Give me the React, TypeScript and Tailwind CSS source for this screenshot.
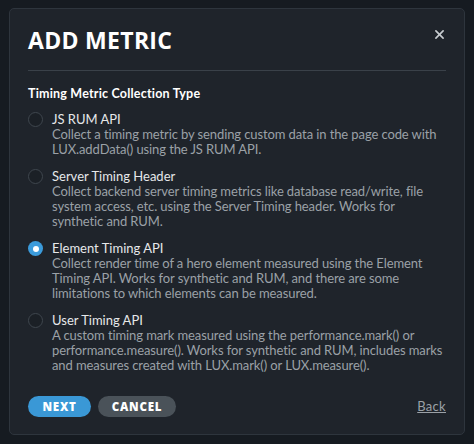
import { useState } from "react";

const options = [
  {
    id: "js",
    label: "JS RUM API",
    desc: "Collect a timing metric by sending custom data in the page code with LUX.addData() using the JS RUM API.",
  },
  {
    id: "server",
    label: "Server Timing Header",
    desc: "Collect backend server timing metrics like database read/write, file system access, etc. using the Server Timing header. Works for synthetic and RUM.",
  },
  {
    id: "element",
    label: "Element Timing API",
    desc: "Collect render time of a hero element measured using the Element Timing API. Works for synthetic and RUM, and there are some limitations to which elements can be measured.",
  },
  {
    id: "user",
    label: "User Timing API",
    desc: "A custom timing mark measured using the performance.mark() or performance.measure(). Works for synthetic and RUM, includes marks and measures created with LUX.mark() or LUX.measure().",
  },
];

export default function App() {
  const [selected, setSelected] = useState("element");

  return (
    <div className="h-[444px] w-[474px] bg-[#161b21] px-[9px] pt-[8px] font-['Lato',sans-serif]">
      <div className="h-[427px] rounded-[5px] border border-[#2e353d] bg-[#1f242b] px-[18px]">
        {/* Header */}
        <div className="flex items-start justify-between pt-[15px] pb-[14px] border-b border-[#3a4149]">
          <h2 className="font-['Open_Sans',sans-serif] text-[23px] font-bold leading-[32px] tracking-[0.3px] text-white">
            ADD METRIC
          </h2>
          <button className="mt-[6px] mr-[2px] text-[#c9cdd1]">
            <svg width="9" height="9" viewBox="0 0 10 10" stroke="currentColor" strokeWidth="1.8" strokeLinecap="round">
              <line x1="1" y1="1" x2="9" y2="9" />
              <line x1="9" y1="1" x2="1" y2="9" />
            </svg>
          </button>
        </div>

        {/* Options */}
        <div className="pt-[15px]">
          <p className="text-[12.5px] font-bold leading-[15px] tracking-[0.2px] text-white">
            Timing Metric Collection Type
          </p>
          <div className="mt-[11px] flex flex-col gap-[12px]">
            {options.map((o) => {
              const on = selected === o.id;
              return (
                <label
                  key={o.id}
                  className="flex cursor-pointer gap-[9px]"
                  onClick={() => setSelected(o.id)}
                >
                  <span
                    className={
                      on
                        ? "flex h-[15px] w-[15px] shrink-0 items-center justify-center rounded-full bg-[#3b9bdb]"
                        : "h-[15px] w-[15px] shrink-0 rounded-full border border-[#3f464e] bg-[#1b2026]"
                    }
                  >
                    {on && <span className="h-[6px] w-[6px] rounded-full bg-white" />}
                  </span>
                  <span className="flex flex-col">
                    <span className="text-[13px] leading-[15px] text-[#e6e8ea]">
                      {o.label}
                    </span>
                    <span className="text-[13px] leading-[15px] tracking-[-0.1px] text-[#9ba1a7]">
                      {o.desc}
                    </span>
                  </span>
                </label>
              );
            })}
          </div>
        </div>

        {/* Footer */}
        <div className="mt-[23px] flex items-center">
          <button className="h-[21px] w-[63px] rounded-full bg-[#3a98d6] font-['Open_Sans',sans-serif] text-[11.5px] font-extrabold tracking-[0.8px] text-white">
            NEXT
          </button>
          <button className="ml-[7px] h-[21px] w-[78px] rounded-full bg-[#4a5259] font-['Open_Sans',sans-serif] text-[11.5px] font-extrabold tracking-[0.8px] text-white">
            CANCEL
          </button>
          <a className="ml-auto text-[13px] tracking-[0.3px] text-[#9ba1a7] underline">Back</a>
        </div>
      </div>
    </div>
  );
}
